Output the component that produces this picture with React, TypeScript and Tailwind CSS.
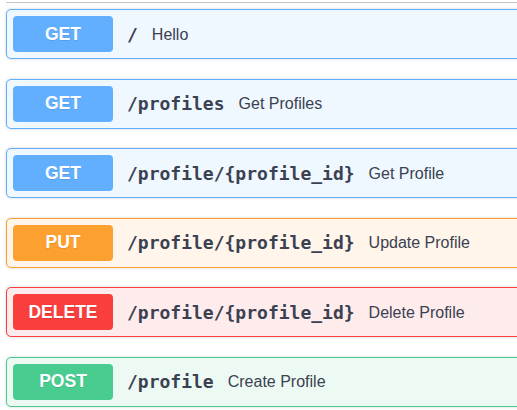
import React from "react"

const ops = [
  { method: "GET", path: "/", summary: "Hello", border: "border-[#61affe]", bg: "bg-[#eff7ff]", badge: "bg-[#61affe]" },
  { method: "GET", path: "/profiles", summary: "Get Profiles", border: "border-[#61affe]", bg: "bg-[#eff7ff]", badge: "bg-[#61affe]" },
  { method: "GET", path: "/profile/{profile_id}", summary: "Get Profile", border: "border-[#61affe]", bg: "bg-[#eff7ff]", badge: "bg-[#61affe]" },
  { method: "PUT", path: "/profile/{profile_id}", summary: "Update Profile", border: "border-[#fca130]", bg: "bg-[#fff5ea]", badge: "bg-[#fca130]" },
  { method: "DELETE", path: "/profile/{profile_id}", summary: "Delete Profile", border: "border-[#f93e3e]", bg: "bg-[#feebeb]", badge: "bg-[#f93e3e]" },
  { method: "POST", path: "/profile", summary: "Create Profile", border: "border-[#49cc90]", bg: "bg-[#edfaf3]", badge: "bg-[#49cc90]" },
]

const App = () => {
  return (
    <div className="w-[517px] h-[410px] overflow-hidden bg-white" style={{ fontFamily: '"Liberation Sans", Arial, sans-serif' }}>
      <div className="pl-[6px] pt-[2px]">
        <div className="w-[560px] border-t border-[#c4c6cb]" />
        <div className="mt-[6px] flex flex-col gap-[19.5px]">
          {ops.map((op, i) => (
            <div
              key={i}
              className={`w-[560px] h-[50px] flex items-center px-[6px] rounded-[5px] border ${op.border} ${op.bg} shadow-[0_0_3px_rgba(0,0,0,0.19)]`}
            >
              <span
                className={`w-[100px] h-[36px] flex items-center justify-center rounded-[4px] ${op.badge} text-white font-bold text-[17.5px] [text-shadow:0_1px_0_rgba(0,0,0,0.1)]`}
              >
                {op.method}
              </span>
              <span
                className="ml-[14px] text-[18px] font-bold text-[#3b4151]"
                style={{ fontFamily: '"DejaVu Sans Mono", "Liberation Mono", monospace' }}
              >
                {op.path}
              </span>
              <span className="ml-[14px] mt-[1px] text-[16px] text-[#3b4151]">{op.summary}</span>
            </div>
          ))}
        </div>
      </div>
    </div>
  )
}

export default App
